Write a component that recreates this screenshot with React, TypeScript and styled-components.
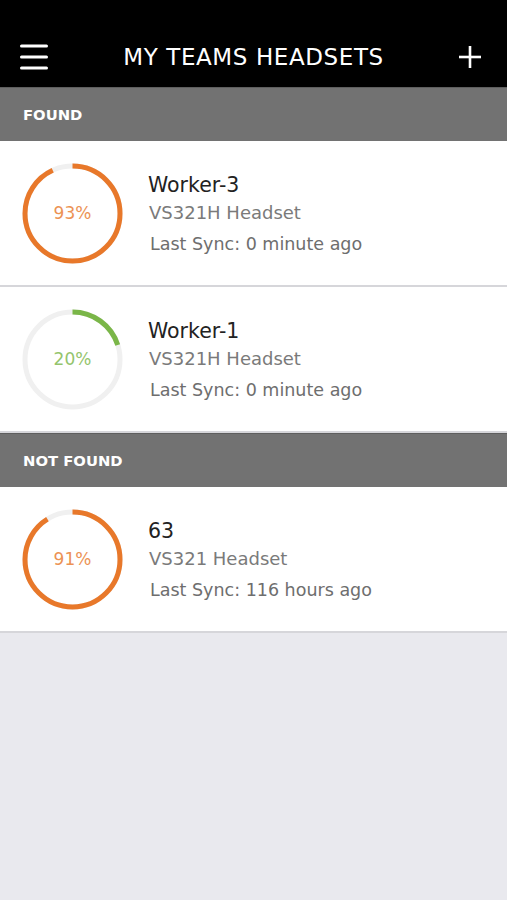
import React from "react";
import styled, { createGlobalStyle } from "styled-components";

const Global = createGlobalStyle`
  html, body { margin: 0; padding: 0; background: #e9e9ee; }
  body { font-family: "DejaVu Sans", "Liberation Sans", sans-serif; }
`;

const Page = styled.div`
  width: 507px;
  min-height: 900px;
  background: #e9e9ee;
  display: flex;
  flex-direction: column;
`;

const TopBar = styled.header`
  height: 87px;
  background: #000;
  display: grid;
  grid-template-columns: 60px 1fr 60px;
  align-items: center;
  padding-top: 26px;
  box-sizing: border-box;
`;

const Title = styled.h1`
  margin: 0;
  text-align: center;
  color: #fff;
  font-size: 23px;
  font-weight: 400;
  letter-spacing: 0.6px;
`;

const IconBtn = styled.div<{ $align: "start" | "end" }>`
  display: flex;
  justify-content: ${(p) => (p.$align === "start" ? "flex-start" : "flex-end")};
  padding: ${(p) => (p.$align === "start" ? "0 0 0 20px" : "0 26px 0 0")};
  align-items: center;
`;

const SectionHeader = styled.div`
  height: 54px;
  background: #727272;
  color: #fff;
  font-size: 14.8px;
  font-weight: 700;
  display: flex;
  align-items: center;
  padding-left: 23px;
  border-top: 1px solid #5e5e5e;
  box-sizing: border-box;
`;

const Row = styled.div`
  height: 146px;
  background: #fff;
  border-bottom: 2px solid #d6d6da;
  box-sizing: border-box;
  display: flex;
  align-items: center;
  padding-left: 21px;
  gap: 24px;
`;

const Gauge = styled.div`
  position: relative;
  width: 103px;
  height: 103px;
  flex: none;
`;

const GaugeLabel = styled.span<{ $color: string }>`
  position: absolute;
  inset: 0;
  display: flex;
  align-items: center;
  justify-content: center;
  font-size: 17px;
  color: ${(p) => p.$color};
  opacity: 0.8;
`;

const Info = styled.div`
  display: flex;
  flex-direction: column;
  padding-top: 2px;
`;

const Name = styled.div`
  font-size: 20.5px;
  color: #222;
  line-height: 24px;
  margin-bottom: 5px;
`;

const Model = styled.div`
  font-size: 18px;
  color: #7a7a7a;
  line-height: 22px;
  margin-bottom: 9px;
  padding-left: 1px;
`;

const Sync = styled.div`
  font-size: 17.5px;
  color: #6e6e6e;
  line-height: 22px;
  padding-left: 2px;
`;

const Ring = ({ pct, color }: { pct: number; color: string }) => {
  const r = 47.5;
  const c = 2 * Math.PI * r;
  return (
    <svg width="103" height="103" viewBox="0 0 103 103">
      <circle cx="51.5" cy="51.5" r={r} fill="none" stroke="#f0f0f0" strokeWidth="5" />
      <circle
        cx="51.5"
        cy="51.5"
        r={r}
        fill="none"
        stroke={color}
        strokeWidth="5"
        strokeDasharray={`${(c * pct) / 100} ${c}`}
        transform="rotate(-90 51.5 51.5)"
      />
    </svg>
  );
};

type Item = { pct: number; name: string; model: string; sync: string };

const orange = "#e8782a";
const green = "#7ab648";

const Device = ({ item }: { item: Item }) => {
  const color = item.pct < 50 ? green : orange;
  return (
    <Row>
      <Gauge>
        <Ring pct={item.pct} color={color} />
        <GaugeLabel $color={color}>{item.pct}%</GaugeLabel>
      </Gauge>
      <Info>
        <Name>{item.name}</Name>
        <Model>{item.model}</Model>
        <Sync>{item.sync}</Sync>
      </Info>
    </Row>
  );
};

const found: Item[] = [
  { pct: 93, name: "Worker-3", model: "VS321H Headset", sync: "Last Sync: 0 minute ago" },
  { pct: 20, name: "Worker-1", model: "VS321H Headset", sync: "Last Sync: 0 minute ago" },
];
const notFound: Item[] = [
  { pct: 91, name: "63", model: "VS321 Headset", sync: "Last Sync: 116 hours ago" },
];

export default function App() {
  return (
    <Page>
      <Global />
      <TopBar>
        <IconBtn $align="start">
          <svg width="28" height="26" viewBox="0 0 28 26">
            <g stroke="#fff" strokeWidth="3" strokeLinecap="round">
              <line x1="1.5" y1="2" x2="26.5" y2="2" />
              <line x1="1.5" y1="13" x2="26.5" y2="13" />
              <line x1="1.5" y1="24" x2="26.5" y2="24" />
            </g>
          </svg>
        </IconBtn>
        <Title>MY TEAMS HEADSETS</Title>
        <IconBtn $align="end">
          <svg width="22" height="22" viewBox="0 0 22 22">
            <g stroke="#fff" strokeWidth="2.6">
              <line x1="11" y1="0" x2="11" y2="22" />
              <line x1="0" y1="11" x2="22" y2="11" />
            </g>
          </svg>
        </IconBtn>
      </TopBar>
      <SectionHeader>FOUND</SectionHeader>
      {found.map((it) => (
        <Device key={it.name} item={it} />
      ))}
      <SectionHeader>NOT FOUND</SectionHeader>
      {notFound.map((it) => (
        <Device key={it.name} item={it} />
      ))}
    </Page>
  );
}
